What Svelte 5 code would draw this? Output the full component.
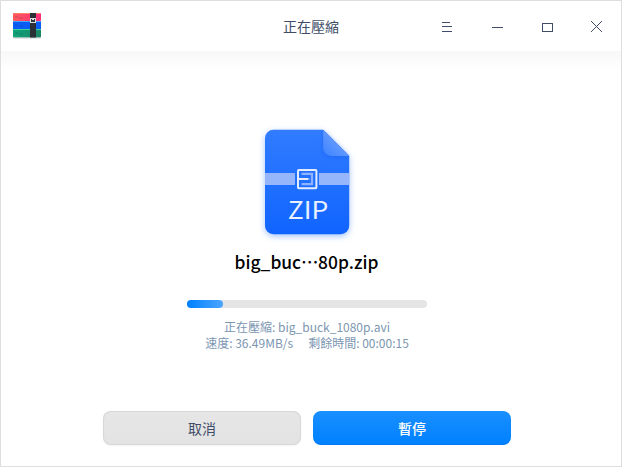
<script>
  const title = '正在壓縮';
  const fileName = 'big_buc⋯80p.zip';
  const currentFile = 'big_buck_1080p.avi';
  const speed = '36.49MB/s';
  const remaining = '00:00:15';
  const progress = 15;
  const [nameStart, nameEnd] = fileName.split('⋯');
</script>

<div class="window">
  <header class="titlebar">
    <svg class="logo" width="28" height="26" viewBox="0 0 28 26" aria-hidden="true">
      <defs>
        <linearGradient id="red" x1="0" x2="1"><stop offset="0" stop-color="#ff5a5c" /><stop offset="1" stop-color="#ff2e78" /></linearGradient>
        <linearGradient id="green" x1="0" x2="1"><stop offset="0" stop-color="#0da578" /><stop offset="1" stop-color="#1c8466" /></linearGradient>
      </defs>
      <rect y="1" width="28" height="24.6" rx="1" fill="#c9cdd2" />
      <rect width="28" height="8" rx="1" fill="url(#red)" />
      <rect x="0.5" width="27" height="1" fill="#ff8067" />
      <rect y="8" width="28" height="8" fill="#0b5cf5" />
      <rect y="8" width="28" height="1" fill="#42a8ff" />
      <rect y="16" width="28" height="8.3" rx="1" fill="url(#green)" />
      <rect y="16" width="28" height="1" fill="#3fd0a0" />
      <path d="M2 4h3M6 5h4M2 12h3M6 13h4M2 20h3M6 21h4" stroke="#12305a" stroke-opacity=".14" stroke-width="2" />
      <rect x="17" width="6" height="24.500" fill="#2b2f36" />
      <rect x="17" y="5" width="6" height="5" fill="#dcdcdc" />
      <path d="M18 6h1v1h2v-1h1v3h-4z" fill="#33363c" />
    </svg>
    <h1>{title}</h1>
    <nav class="controls">
      <svg viewBox="0 0 50 50"><path d="M20 22.500h8M20 26.500h10M20 31.500h10" /></svg>
      <svg viewBox="0 0 50 50"><path d="M20 27.500h11" /></svg>
      <svg viewBox="0 0 50 50"><path d="M20 23.500h11M20 31.500h11M20.500 23v9M30.500 23v9" /></svg>
      <svg viewBox="0 0 50 50"><path d="M19 21l11 11M30 21l-11 11" /></svg>
    </nav>
  </header>

  <main>
    <svg class="file" width="112" height="128" viewBox="0 0 112 128" aria-hidden="true">
      <defs>
        <linearGradient id="body" x1="0" y1="0" x2="0" y2="1"><stop offset="0" stop-color="#317cff" /><stop offset="1" stop-color="#1064ff" /></linearGradient>
        <linearGradient id="fold" x1="0" y1="1" x2=".6" y2=".4"><stop offset="0" stop-color="#3d82ff" /><stop offset="1" stop-color="#669dff" /></linearGradient>
      </defs>
      <path class="sheet" d="M22.500 9.700h49.800l25.900 26v70a8.500 8.500 0 0 1-8.500 8.500H22.500a8.500 8.500 0 0 1-8.500-8.500V18.200a8.500 8.500 0 0 1 8.500-8.500z" fill="url(#body)" />
      <path class="corner" d="M72.200 9.900l26 26H80.200a8 8 0 0 1-8-8z" fill="url(#fold)" />
      <path d="M14 53h30v12H14zM68 53h30.200v12H68z" fill="#95b6fb" />
      <path d="M50.500 53.800h10.500v10.400H50.500" fill="none" stroke="#8fb3ff" stroke-width="2.200" />
      <path d="M52.500 59h6" stroke="#8fb3ff" stroke-width="1.800" />
      <rect x="47" y="49.900" width="18.400" height="18.400" rx=".8" fill="none" stroke="#e4edff" stroke-width="2" />
      <path d="M47.500 59h9.500" stroke="#e4edff" stroke-width="2" />
      <text x="57" y="99.200" text-anchor="middle" textLength="40.500" lengthAdjust="spacingAndGlyphs">ZIP</text>
    </svg>

    <h2 lang="zh-Hant">{nameStart}<span class="gap">⋯</span>{nameEnd}</h2>
    <div class="track"><div class="fill" style:width="{progress}%"></div></div>
    <div class="details">
      <p>{title}: {currentFile}</p>
      <p class="stats"><span>速度: {speed}</span><span>剩餘時間: {remaining}</span></p>
    </div>
    <div class="actions">
      <button class="cancel">取消</button>
      <button class="pause">暫停</button>
    </div>
  </main>
</div>

<style>
  :global(body) { background: #fff; overflow: hidden; }
  .window {
    box-sizing: border-box;
    width: 622px;
    height: 467px;
    border: 1px solid #dedede;
    background: #fff;
    font-family: "Noto Sans CJK SC", "Noto Sans CJK TC", sans-serif;
    color: #414d68;
  }
  .titlebar {
    display: grid;
    grid-template-columns: 200px 220px 200px;
    height: 50px;
    align-items: center;
  }
  .logo { margin-left: 12px; }
  h1 {
    margin: -1px 0 0;
    font-size: 14px;
    line-height: 20px;
    font-weight: 400;
    text-align: center;
  }
  .controls { display: flex; height: 50px; margin: -2px 0 0 1px; }
  .controls svg {
    flex: none;
    width: 50px;
    height: 50px;
    fill: none;
    stroke: #414d68;
    stroke-width: 1;
    shape-rendering: crispEdges;
  }
  main {
    display: flex;
    flex-direction: column;
    align-items: center;
    box-sizing: border-box;
    height: 415px;
    padding: 69px 8px 0 0;
    background: linear-gradient(#f8f8f8, #fff 20px);
  }
  .file { flex: none; overflow: visible; }
  .sheet { filter: drop-shadow(0 2px 3px rgb(16 100 255 / 38%)); }
  .corner { filter: drop-shadow(0 1px 2px rgb(0 60 210 / 22%)); }
  .file text {
    font: 400 24.5px "Noto Sans CJK SC", sans-serif;
    fill: #e9f0ff;
  }
  h2 {
    display: flex;
    margin: 1px 1px 0 0;
    font-size: 17.4px;
    line-height: 26px;
    font-weight: 500;
    color: #000;
  }
  .gap {
    width: 17px;
    text-align: center;
    font-family: "Noto Sans CJK TC", sans-serif;
  }
  .track {
    width: 240px;
    height: 8px;
    margin-top: 25px;
    border-radius: 4px;
    background: #e5e5e5;
  }
  .fill {
    height: 8px;
    border-radius: 4px;
    background: linear-gradient(90deg, #0080ff, #4ba5ff);
  }
  .details {
    margin-top: 11px;
    font-size: 12px;
    line-height: 16px;
    color: #7c96b1;
    text-align: center;
  }
  p { margin: 0; white-space: nowrap; }
  .stats { display: flex; justify-content: center; gap: 15px; }
  .actions { display: flex; gap: 12px; margin-top: 60px; }
  button {
    box-sizing: border-box;
    width: 198px;
    height: 34px;
    padding: 0;
    border: 0;
    border-radius: 8px;
    font: 400 14px/34px "Noto Sans CJK SC", "Noto Sans CJK TC", sans-serif;
  }
  .cancel {
    color: #414d68;
    background: linear-gradient(#e6e6e6, #e3e3e3);
    box-shadow: inset 0 0 0 1px #d8d8d8, 0 1px 2px rgb(0 0 0 / 5%);
  }
  .pause {
    color: #fff;
    font-weight: 500;
    background: linear-gradient(#1a8fff, #0081ff);
    box-shadow: inset 0 -1px 0 rgb(0 60 180 / 14%);
  }
</style>
